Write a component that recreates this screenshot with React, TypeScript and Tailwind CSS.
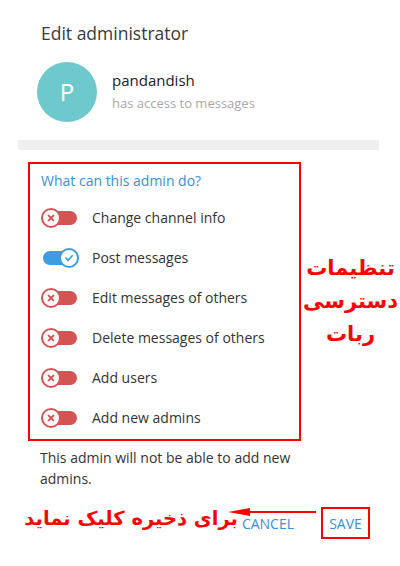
import React from 'react';

type Right = { label: string; on: boolean };

const RIGHTS: Right[] = [
  { label: 'Change channel info', on: false },
  { label: 'Post messages', on: true },
  { label: 'Edit messages of others', on: false },
  { label: 'Delete messages of others', on: false },
  { label: 'Add users', on: false },
  { label: 'Add new admins', on: false },
];

function Toggle({ on }: { on: boolean }) {
  return (
    <div className="relative w-[38px] h-[20px] shrink-0">
      <div
        className={`absolute left-[2px] right-[2px] top-[3px] h-[14px] rounded-full ${
          on ? 'bg-[#3d9de3]' : 'bg-[#d45454]'
        }`}
      />
      <div
        className={`absolute top-0 w-[20px] h-[20px] rounded-full bg-white border-2 flex items-center justify-center ${
          on ? 'right-0 border-[#3d9de3]' : 'left-0 border-[#d45454]'
        }`}
      >
        {on ? (
          <svg width="10" height="10" viewBox="0 0 10 10">
            <path d="M2 5.2 L4.2 7.3 L8.2 2.8" fill="none" stroke="#3d9de3" strokeWidth="1.7" strokeLinecap="round" strokeLinejoin="round" />
          </svg>
        ) : (
          <svg width="10" height="10" viewBox="0 0 10 10">
            <path d="M2.6 2.6 L7.4 7.4 M7.4 2.6 L2.6 7.4" stroke="#d45454" strokeWidth="2" strokeLinecap="round" />
          </svg>
        )}
      </div>
    </div>
  );
}

export default function App() {
  return (
    <div className="w-[400px] h-[566px] bg-white flex flex-col font-['Open_Sans',sans-serif] overflow-hidden">
      {/* Header */}
      <div className="pt-[21px] pl-[41px] text-[17.5px] leading-[24px] text-[#3a3a3a]">Edit administrator</div>

      <div className="mt-[17px] pl-[37px] flex items-center">
        <div className="w-[60px] h-[60px] rounded-full bg-[#6ec9cc] flex items-center justify-center text-white text-[24px]">
          P
        </div>
        <div className="ml-[15px] flex flex-col">
          <span className="text-[15px] leading-[20px] text-[#222]">pandandish</span>
          <span className="mt-[2px] text-[13px] leading-[22px] text-[#a8a8a8]">has access to messages</span>
        </div>
      </div>

      <div className="mt-[18px] ml-[18px] w-[361px] h-[10px] bg-[#efefef]" />

      {/* Rights box + note */}
      <div className="mt-[12px] flex items-center">
        <div className="ml-[28px] w-[273px] border-2 border-[#ff0000] pt-[7px] pb-[1px] pl-[11px]">
          <div className="text-[14px] leading-[20px] text-[#3b8fd6]">What can this admin do?</div>
          <div className="mt-[7px] flex flex-col">
            {RIGHTS.map((r) => (
              <div key={r.label} className="h-[40px] flex items-center">
                <Toggle on={r.on} />
                <span className="ml-[13px] text-[14px] leading-[20px] text-[#333]">{r.label}</span>
              </div>
            ))}
          </div>
        </div>
        <div
          dir="rtl"
          className="flex-1 flex flex-col items-center font-['DejaVu_Sans',sans-serif] font-bold text-[21px] leading-[33px] text-[#ff0000]"
        >
          <span>تنظیمات</span>
          <span>دسترسی</span>
          <span>ربات</span>
        </div>
      </div>

      <p className="mt-[6px] ml-[40px] w-[265px] text-[14px] leading-[21px] text-[#333]">
        This admin will not be able to add new admins.
      </p>

      {/* Actions */}
      <div className="relative mt-[18px] h-[32px] pr-[30px] flex items-center justify-end">
        <span dir="rtl" className="font-['DejaVu_Sans',sans-serif] font-bold text-[19.5px] leading-[28px] text-[#ff0000] -mt-[8px]">
          برای ذخیره کلیک نماید
        </span>
        <span className="ml-[4px] mt-[2px] text-[14px] leading-[20px] text-[#3b8fd6]">CANCEL</span>
        <div className="ml-[27px] w-[49px] h-[32px] border-2 border-[#ff0000] flex items-center justify-center">
          <span className="mt-[1px] text-[14px] leading-[20px] text-[#3b8fd6]">SAVE</span>
        </div>
        <svg className="absolute left-[228px] top-0" width="92" height="10" viewBox="0 0 92 10">
          <path d="M0 5 L22 1 L22 9 Z" fill="#ff0000" />
          <line x1="20" y1="5" x2="88" y2="5" stroke="#ff0000" strokeWidth="2" />
        </svg>
      </div>
    </div>
  );
}
